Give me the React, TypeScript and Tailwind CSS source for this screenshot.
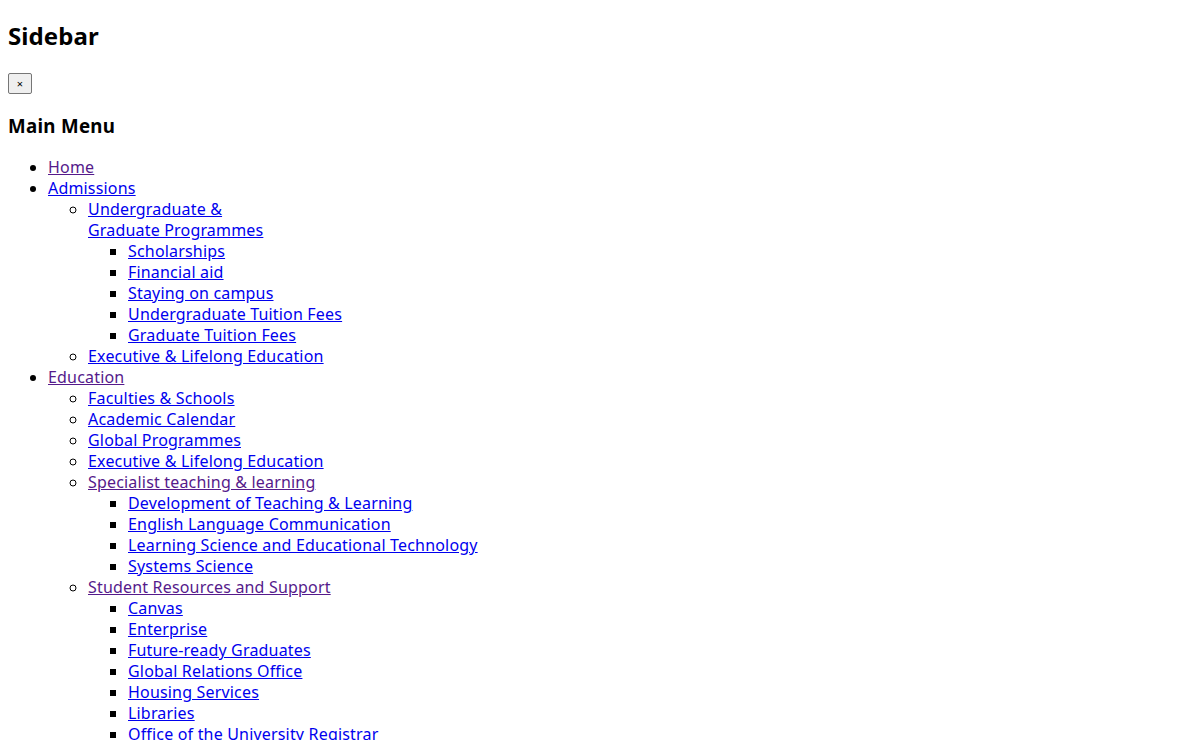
import React from 'react';

type Item = {
  label: React.ReactNode;
  visited?: boolean;
  children?: Item[];
};

const menu: Item[] = [
  { label: 'Home', visited: true },
  {
    label: 'Admissions',
    children: [
      {
        label: (
          <>
            Undergraduate &amp;
            <br />
            Graduate Programmes
          </>
        ),
        children: [
          { label: 'Scholarships' },
          { label: 'Financial aid' },
          { label: 'Staying on campus' },
          { label: 'Undergraduate Tuition Fees' },
          { label: 'Graduate Tuition Fees' },
        ],
      },
      { label: 'Executive & Lifelong Education' },
    ],
  },
  {
    label: 'Education',
    visited: true,
    children: [
      { label: 'Faculties & Schools' },
      { label: 'Academic Calendar' },
      { label: 'Global Programmes' },
      { label: 'Executive & Lifelong Education' },
      {
        label: 'Specialist teaching & learning',
        visited: true,
        children: [
          { label: 'Development of Teaching & Learning' },
          { label: 'English Language Communication' },
          { label: 'Learning Science and Educational Technology' },
          { label: 'Systems Science' },
        ],
      },
      {
        label: 'Student Resources and Support',
        visited: true,
        children: [
          { label: 'Canvas' },
          { label: 'Enterprise' },
          { label: 'Future-ready Graduates' },
          { label: 'Global Relations Office' },
          { label: 'Housing Services' },
          { label: 'Libraries' },
          { label: 'Office of the University Registrar' },
        ],
      },
    ],
  },
];

function MenuList({ items, depth }: { items: Item[]; depth: number }) {
  // browser-default bullets: disc, circle, square
  const marker = depth === 0 ? 'list-disc' : depth === 1 ? 'list-[circle]' : 'list-[square]';
  return (
    <ul className={`${marker} pl-10`}>
      {items.map((item, i) => (
        <li key={i}>
          <a
            href="#"
            className={`underline ${item.visited ? 'text-[#551a8b]' : 'text-[#0000ee]'}`}
          >
            {item.label}
          </a>
          {item.children && <MenuList items={item.children} depth={depth + 1} />}
        </li>
      ))}
    </ul>
  );
}

export default function App() {
  return (
    <div className="min-h-[740px] bg-white px-2 pt-[20px] pb-4 font-['Noto_Sans','Liberation_Sans',sans-serif] text-[16px] leading-[21px] tracking-[0.18px] text-black">
      <h2 className="text-[24px] font-bold leading-[32px] tracking-[0.1px]">Sidebar</h2>

      <button className="mt-[21px] flex h-[21px] w-[24px] items-center justify-center rounded-[2px] border border-[#767676] bg-[#efefef] text-[11px] leading-none tracking-normal text-black">
        ×
      </button>

      <h3 className="mt-[19px] text-[18.72px] font-bold leading-[25px] tracking-[0.3px]">Main Menu</h3>

      <nav className="mt-[19px]">
        <MenuList items={menu} depth={0} />
      </nav>
    </div>
  );
}
